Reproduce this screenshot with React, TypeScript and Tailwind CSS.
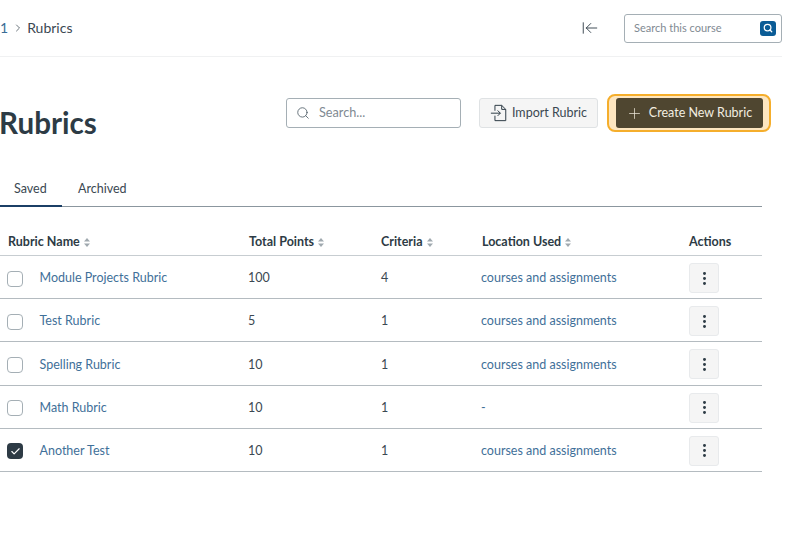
import { Search, Plus, MoreVertical, Check, ChevronRight, ArrowLeftToLine } from "lucide-react";

const rows = [
  { name: "Module Projects Rubric", points: "100", criteria: "4", location: "courses and assignments", checked: false },
  { name: "Test Rubric", points: "5", criteria: "1", location: "courses and assignments", checked: false },
  { name: "Spelling Rubric", points: "10", criteria: "1", location: "courses and assignments", checked: false },
  { name: "Math Rubric", points: "10", criteria: "1", location: "-", checked: false },
  { name: "Another Test", points: "10", criteria: "1", location: "courses and assignments", checked: true },
];

const SortIcon = () => (
  <svg width="6" height="9" viewBox="0 0 6 9" className="ml-[4px] mt-[1px] fill-[#a0a9af]">
    <path d="M3 0 6 3.6H0z" />
    <path d="M3 9 0 5.4h6z" />
  </svg>
);

const ImportIcon = () => (
  <svg width="18" height="18" viewBox="0 0 20 20" fill="none" stroke="#2d3b45" strokeWidth="1.1" className="mr-[4px]">
    <path d="M5.5 7.5V1.5h7.5l4.5 4.5v12.5h-12V13" />
    <path d="M13 1.5v4.5h4.5" />
    <path d="M1 10.2h10.5M8.5 7.2l3 3-3 3" />
  </svg>
);

const HeaderCell = ({ label, sort = true, className = "" }: { label: string; sort?: boolean; className?: string }) => (
  <div className={`flex items-center font-bold text-[12.5px] text-[#2d3b45] ${className}`}>
    {label}
    {sort && <SortIcon />}
  </div>
);

export default function App() {
  return (
    <div className="w-[800px] h-[533px] bg-white overflow-hidden font-['Lato',sans-serif] text-[#3b4852]">
      {/* Top bar */}
      <div className="w-[782px] h-[57px] border-b border-[#f0f1f2] flex items-center justify-between">
        <div className="flex items-center text-[14px] -mt-[1px]">
          <span className="text-[#3a6d96]">1</span>
          <ChevronRight size={12} strokeWidth={1.5} className="mx-[4px] text-[#3b4852]" />
          <span className="-ml-[1px]">Rubrics</span>
        </div>
        <div className="flex items-center">
          <ArrowLeftToLine size={18} strokeWidth={1.2} className="text-[#2d3b45] mr-[25px]" />
          <div className="w-[158px] h-[29px] border border-[#a5afb5] rounded-[3px] flex items-center justify-between pl-[9px] pr-[5px]">
            <span className="text-[11px] text-[#7f8a92]">Search this course</span>
            <div className="w-[16px] h-[15px] rounded-[3px] bg-[#0b5c96] flex items-center justify-center">
              <Search size={10} strokeWidth={3} className="text-white" />
            </div>
          </div>
        </div>
      </div>

      {/* Title and actions */}
      <div className="w-[771px] mt-[37px] flex items-start">
        <h1 className="text-[29.6px] leading-[36px] font-bold mt-[11px] -ml-[1px] text-[#2d3b45]">Rubrics</h1>
        <div className="ml-auto flex items-center">
          <div className="w-[175px] h-[30px] border border-[#a5afb5] rounded-[3px] flex items-center pl-[9px] mr-[18px]">
            <Search size={14} strokeWidth={1.4} className="text-[#4a5862]" />
            <span className="ml-[9px] text-[12.7px] text-[#7f8a92]">Search...</span>
          </div>
          <div className="w-[119px] h-[30px] bg-[#f5f5f5] border border-[#dfe2e4] rounded-[3px] flex items-center justify-center text-[12.5px] mr-[9px]">
            <ImportIcon />
            Import Rubric
          </div>
          <div className="w-[164px] h-[38px] rounded-[8px] border-2 border-[#f5ae2c] bg-[#fde6c0] flex items-center justify-center">
            <div className="w-[147px] h-[30px] rounded-[3px] bg-[#4f4630] text-[#f3eee0] text-[12.5px] flex items-center justify-center">
              <Plus size={17} strokeWidth={1} className="mr-[6px]" />
              Create New Rubric
            </div>
          </div>
        </div>
      </div>

      {/* Tabs */}
      <div className="w-[762px] mt-[33px] h-[33px] border-b border-[#8b969e] flex text-[12.5px]">
        <div className="w-[62px] h-[33px] border-b-2 border-[#1b3f66] pl-[14px] pt-[6px]">Saved</div>
        <div className="ml-[16px] pt-[6px]">Archived</div>
      </div>

      {/* Table */}
      <div className="w-[762px] mt-[16px]">
        <div className="grid grid-cols-[248px_133px_100px_207px_74px] h-[33px] items-center border-b border-[#c7cdd1] pt-[6px]">
          <HeaderCell label="Rubric Name" className="pl-[8px]" />
          <HeaderCell label="Total Points" className="pl-[1px]" />
          <HeaderCell label="Criteria" />
          <HeaderCell label="Location Used" className="pl-[1px]" />
          <HeaderCell label="Actions" sort={false} className="pl-[1px]" />
        </div>
        {rows.map((row) => (
          <div
            key={row.name}
            className="grid grid-cols-[248px_133px_100px_207px_74px] h-[43.2px] items-center border-b border-[#b4bbc0] text-[12.5px] pt-[3px]"
          >
            <div className="flex items-center pl-[7px]">
              {row.checked ? (
                <div className="w-[16px] h-[16px] rounded-[4px] bg-[#2d3b45] flex items-center justify-center">
                  <Check size={11} strokeWidth={2.5} className="text-white" />
                </div>
              ) : (
                <div className="w-[16px] h-[16px] rounded-[4px] border border-[#a5afb5] bg-white" />
              )}
              <span className="ml-[16.5px] text-[#3f7099]">{row.name}</span>
            </div>
            <div>{row.points}</div>
            <div>{row.criteria}</div>
            <div className="text-[#3f7099]">{row.location}</div>
            <div className="pl-[1px]">
              <div className="w-[30px] h-[30px] bg-[#f5f5f5] border border-[#e8eaec] rounded-[3px] flex items-center justify-center -mt-[1px]">
                <MoreVertical size={17} strokeWidth={2.2} className="text-[#2d3b45]" />
              </div>
            </div>
          </div>
        ))}
      </div>
    </div>
  );
}
